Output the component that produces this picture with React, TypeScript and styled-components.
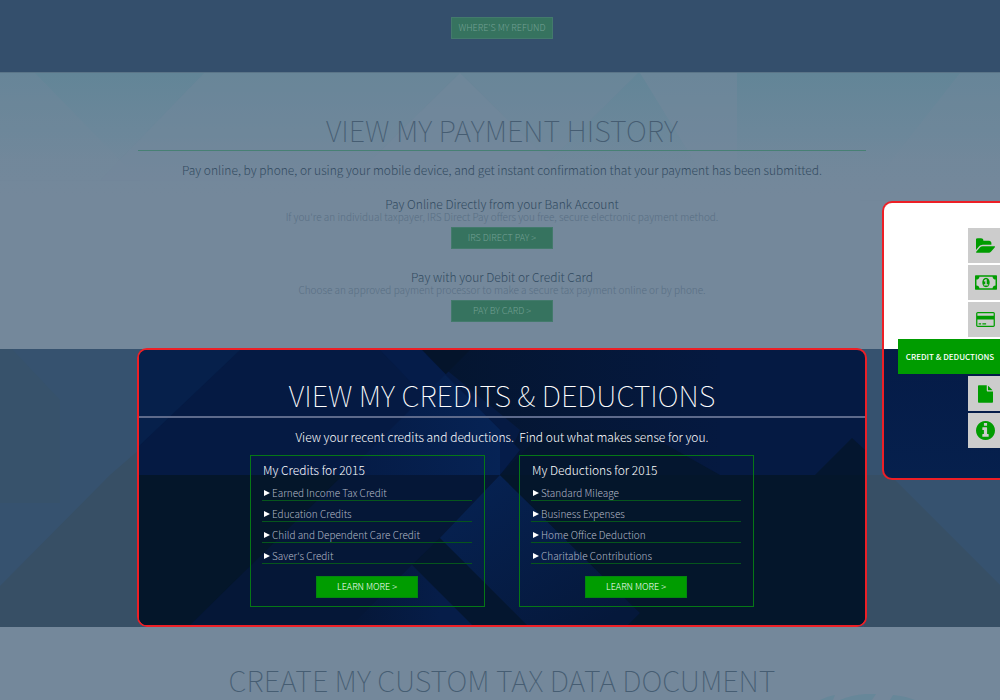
import React from "react";
import styled, { createGlobalStyle } from "styled-components";

const Global = createGlobalStyle`
  *, *::before, *::after { box-sizing: border-box; }
  body {
    margin: 0;
    background: #74889b;
    font-family: "Noto Sans CJK SC", "Noto Sans", sans-serif;
  }
  h1, h2, h3, p, ul { margin: 0; padding: 0; font-weight: 400; }
  ul { list-style: none; }
`;

const Page = styled.main`
  position: relative;
  min-height: 100vh;
  overflow: hidden;
`;

const Section = styled.section<{ $tone: "dark" | "light" }>`
  position: relative;
  display: flex;
  flex-direction: column;
  align-items: center;
  padding-left: 4px;
  background: ${(p) => (p.$tone === "dark" ? "#344f6c" : "#74889b")};
`;

const RefundSection = styled(Section)`
  padding-top: 17px;
  padding-bottom: 33px;
`;

const PaymentSection = styled(Section)`
  padding-bottom: 27px;
  border-top: 1px solid #5b7588;
`;

const DocumentSection = styled(Section)`
  min-height: 73px;
  padding-top: 33px;
`;

const Backdrop = styled.svg`
  position: absolute;
  inset: 0;
  width: 100%;
  height: 100%;
`;

const Column = styled.div`
  position: relative;
  display: flex;
  flex-direction: column;
  align-items: center;
  width: 100%;
  max-width: 728px;
  text-align: center;
`;

const Title = styled.h2<{ $color: string }>`
  width: 100%;
  font-size: 29px;
  font-weight: 100;
  line-height: 38px;
  white-space: nowrap;
  text-align: center;
  color: ${(p) => p.$color};
`;

const PaymentTitle = styled(Title)`
  padding: 37px 0 2px;
  border-bottom: 1px solid #478074;
`;

const CreditTitle = styled(Title)`
  padding: 25px 0 3px;
  border-bottom: 2px solid #5d6a8b;
`;

const Lead = styled.p<{ $color: string }>`
  margin-top: 9px;
  font-size: 12px;
  font-weight: 300;
  line-height: 20px;
  white-space: pre;
  color: ${(p) => p.$color};
`;

const Option = styled.div`
  display: flex;
  flex-direction: column;
  align-items: center;
  margin-top: 17px;

  & + & {
    margin-top: 21px;
  }
`;

const OptionTitle = styled.h3`
  font-size: 12px;
  font-weight: 300;
  line-height: 13px;
  color: #324b61;
`;

const OptionText = styled.p`
  font-size: 10px;
  font-weight: 300;
  line-height: 13px;
  color: #596f84;
`;

const Button = styled.button<{ $muted?: boolean }>`
  width: 102px;
  height: 22px;
  padding: 0;
  border: 1px solid ${(p) => (p.$muted ? "#437a6c" : "#04860f")};
  background: ${(p) => (p.$muted ? "#36735f" : "#009c00")};
  color: ${(p) => (p.$muted ? "#74a094" : "#fff")};
  font-family: inherit;
  font-size: 9px;
  font-weight: 300;
  line-height: 20px;
  cursor: pointer;
`;

const OptionButton = styled(Button)`
  margin-top: 4px;
`;

const Spotlight = styled(Column)`
  max-width: 730px;
  margin-top: -1px;
  padding-bottom: 18px;
  overflow: hidden;
  border: 2px solid #ed1f26;
  border-radius: 10px;
  background: #051a43;
`;

const SpotlightBody = styled.div`
  position: relative;
  display: flex;
  flex-direction: column;
  align-items: center;
  width: 100%;
`;

const Cards = styled.div`
  display: flex;
  gap: 34px;
  margin-top: 8px;
`;

const Card = styled.article`
  display: flex;
  flex-direction: column;
  width: 235px;
  padding: 4px 12px 8px 11px;
  border: 1px solid #067716;
  text-align: left;
`;

const CardTitle = styled.h3`
  padding-left: 1px;
  font-size: 12px;
  font-weight: 300;
  line-height: 20px;
  color: #fff;
`;

const Item = styled.li`
  display: flex;
  align-items: center;
  gap: 2px;
  height: 21px;
  padding: 6px 0 0 2px;
  border-bottom: 1px solid #06561c;
  color: #b2b8c6;
  font-size: 10px;
  font-weight: 300;
  line-height: 14px;

  &::before {
    content: "";
    border-left: 6px solid #fff;
    border-top: 3px solid transparent;
    border-bottom: 3px solid transparent;
  }
`;

const CardButton = styled(Button)`
  align-self: center;
  margin-top: 12px;
`;

const SideNav = styled.nav`
  position: absolute;
  top: 201px;
  right: 0;
  display: flex;
  flex-direction: column;
  align-items: flex-end;
  gap: 2px;
  width: 118px;
  padding: 25px 0 30px;
  border: 2px solid #ed1f26;
  border-right: 0;
  border-radius: 10px 0 0 10px;
  background: linear-gradient(#fff 146px, #051b47 146px, #06204d);
`;

const NavTile = styled.button`
  display: flex;
  align-items: center;
  justify-content: center;
  width: 32px;
  height: 35px;
  padding: 0 0 0 3px;
  border: 0;
  background: #ccc;
  color: #009c00;
  cursor: pointer;
`;

const NavCurrent = styled(NavTile)`
  width: 102px;
  padding: 0 0 0 2px;
  background: #009c00;
  color: #fff;
  font-family: inherit;
  font-size: 8px;
  font-weight: 500;
`;

const Glyph = styled.svg`
  flex: none;
  fill: currentColor;
`;

const Ring = styled.svg`
  position: absolute;
  right: 80px;
  bottom: 0;
`;

type Icon = { label: string; box: string; w: number; h: number; d: string };

const iconsAbove: Icon[] = [
  {
    label: "My tax records",
    box: "0 128 1815 1408",
    w: 19,
    h: 15,
    d: "M1815 952q0 31-31 66l-336 396q-43 51-120.5 86.5t-143.5 35.5h-1088q-34 0-60.5-13t-26.5-43q0-31 31-66l336-396q43-51 120.5-86.5t143.5-35.5h1088q34 0 60.5 13t26.5 43zm-343-344v160h-832q-94 0-197 47.5t-164 119.5l-337 396-5 6q0-4-.5-12.5t-.5-12.5v-960q0-92 66-158t158-66h320q92 0 158 66t66 158v32h544q92 0 158 66t66 158z",
  },
  {
    label: "My refund",
    box: "0 256 1920 1280",
    w: 22,
    h: 15,
    d: "M768 1152h384v-96h-128v-448h-114l-148 137 77 80q42-37 55-57h2v288h-128v96zm512-256q0 70-21 142t-59.5 134-101.5 101-138 39-138-39-101.5-101-59.5-134-21-142 21-142 59.5-134 101.5-101 138-39 138 39 101.5 101 59.5 134 21 142zm512 256v-512q-106 0-181-75t-75-181h-1152q0 106-75 181t-181 75v512q106 0 181 75t75 181h1152q0-106 75-181t181-75zm128-832v1152q0 26-19 45t-45 19h-1792q-26 0-45-19t-19-45v-1152q0-26 19-45t45-19h1792q26 0 45 19t19 45z",
  },
  {
    label: "Payment history",
    box: "0 128 1920 1536",
    w: 19,
    h: 15,
    d: "M1760 128q66 0 113 47t47 113v1216q0 66-47 113t-113 47h-1600q-66 0-113-47t-47-113v-1216q0-66 47-113t113-47h1600zm-1600 128q-13 0-22.5 9.5t-9.5 22.5v224h1664v-224q0-13-9.5-22.5t-22.5-9.5h-1600zm1600 1280q13 0 22.5-9.5t9.5-22.5v-608h-1664v608q0 13 9.5 22.5t22.5 9.5h1600zm-1504-128v-128h256v128h-256zm384 0v-128h384v128h-384z",
  },
];

const iconsBelow: Icon[] = [
  {
    label: "Custom tax data document",
    box: "128 0 1536 1792",
    w: 15,
    h: 18,
    d: "M1152 512v-472q22 14 36 28l408 408q14 14 28 36h-472zm-128 32q0 40 28 68t68 28h544v1056q0 40-28 68t-68 28h-1344q-40 0-68-28t-28-68v-1600q0-40 28-68t68-28h800v544z",
  },
  {
    label: "Information",
    box: "128 128 1536 1536",
    w: 19,
    h: 19,
    d: "M1152 1376v-160q0-14-9-23t-23-9h-96v-512q0-14-9-23t-23-9h-320q-14 0-23 9t-9 23v160q0 14 9 23t23 9h96v320h-96q-14 0-23 9t-9 23v160q0 14 9 23t23 9h448q14 0 23-9t9-23zm-128-896v-160q0-14-9-23t-23-9h-192q-14 0-23 9t-9 23v160q0 14 9 23t23 9h192q14 0 23-9t9-23zm640 416q0 209-103 385.5t-279.5 279.5-385.5 103-385.5-103-279.5-279.5-103-385.5 103-385.5 279.5-279.5 385.5-103 385.5 103 279.5 279.5 103 385.5z",
  },
];

const cards = [
  {
    title: "My Credits for 2015",
    items: ["Earned Income Tax Credit", "Education Credits", "Child and Dependent Care Credit", "Saver's Credit"],
  },
  {
    title: "My Deductions for 2015",
    items: ["Standard Mileage", "Business Expenses", "Home Office Deduction", "Charitable Contributions"],
  },
];

const payOptions = [
  {
    title: "Pay Online Directly from your Bank Account",
    text: "If you're an individual taxpayer, IRS Direct Pay offers you free, secure electronic payment method.",
    action: "IRS DIRECT PAY >",
  },
  {
    title: "Pay with your Debit or Credit Card",
    text: "Choose an approved payment processor to make a secure tax payment online or by phone.",
    action: "PAY BY CARD >",
  },
];

const Tile = ({ icon }: { icon: Icon }) => (
  <NavTile aria-label={icon.label}>
    <Glyph width={icon.w} height={icon.h} viewBox={icon.box} aria-hidden="true">
      <path d={icon.d} />
    </Glyph>
  </NavTile>
);

const PaymentBackdrop = () => (
  <Backdrop viewBox="0 72 1000 277" preserveAspectRatio="none" aria-hidden="true">
    <defs>
      <linearGradient id="teal" x1="0" y1="72" x2="0" y2="200" gradientUnits="userSpaceOnUse">
        <stop offset="0" stopColor="#628597" />
        <stop offset="0.5" stopColor="#6a879a" stopOpacity="0.8" />
        <stop offset="1" stopColor="#74889b" stopOpacity="0" />
      </linearGradient>
    </defs>
    <rect y="72" width="1000" height="130" fill="url(#teal)" />
    <path d="M204 72H500V180H100z" fill="#74889b" opacity="0.4" />
    <path d="M460 72L350 180H570z" fill="#74889b" opacity="0.5" />
    <path d="M0 72H35L140 180H0z" fill="#74889b" opacity="0.3" />
    <path d="M500 72H638L540 170H500z" fill="#74889b" opacity="0.4" />
    <path d="M640 72H737V170H700L640 72z" fill="#74889b" opacity="0.5" />
    <path d="M960 72H1000V200H860z" fill="#74889b" opacity="0.3" />
  </Backdrop>
);

const DarkBackdrop = () => (
  <Backdrop viewBox="0 349 1000 278" preserveAspectRatio="none" aria-hidden="true">
    <path d="M0 349H1000V627H0z" fill="#36526f" />
    <path d="M0 349H12L60 400V503H0z" fill="#37526b" />
    <path d="M140 449V627H0V586L110 475z" fill="#374f65" />
    <path d="M864 475H890L1000 585V627H864z" fill="#374f65" />
  </Backdrop>
);

const SpotlightBackdrop = () => (
  <Backdrop viewBox="139 350 726 275" preserveAspectRatio="none" aria-hidden="true">
    <defs>
      <linearGradient id="shade" x1="0" y1="0" x2="1" y2="0">
        <stop offset="0" stopColor="#04152f" />
        <stop offset="1" stopColor="#051940" />
      </linearGradient>
      <linearGradient id="peak" x1="0" y1="0" x2="1" y2="0">
        <stop offset="0" stopColor="#051b45" />
        <stop offset="1" stopColor="#062355" />
      </linearGradient>
      <linearGradient id="streak" x1="500" y1="475" x2="600" y2="625" gradientUnits="userSpaceOnUse">
        <stop offset="0" stopColor="#062150" />
        <stop offset="1" stopColor="#05183b" />
      </linearGradient>
      <linearGradient id="wedge" x1="350" y1="0" x2="440" y2="0" gradientUnits="userSpaceOnUse">
        <stop offset="0" stopColor="#051737" />
        <stop offset="1" stopColor="#061d49" />
      </linearGradient>
    </defs>
    <path d="M139 350H240L139 446z" fill="#06204b" />
    <path d="M422 350H720V475H500L520 430z" fill="url(#shade)" />
    <path d="M422 350H470L445 375z" fill="#04142b" />
    <path d="M380 350H422L520 450L500 475z" fill="#051c49" />
    <path d="M445 375L500 430V475H345z" fill="url(#peak)" />
    <path d="M139 475H865V625H139z" fill="#051737" />
    <path d="M139 475H343L190 625H139z" fill="#04162a" />
    <path d="M440 538L412 565L472 625H530z" fill="#04162f" />
    <path d="M412 565L472 625H352z" fill="url(#wedge)" />
    <path d="M500 475L640 613L628 625H527L440 538z" fill="url(#streak)" />
    <path d="M500 475H865V625H628L640 613z" fill="#04162b" />
    <path d="M500 475L545 430H640L720 475z" fill="#04162f" />
    <path d="M852 438L865 450V475H815z" fill="#04162f" />
  </Backdrop>
);

export default function App() {
  return (
    <Page>
      <Global />
      <RefundSection $tone="dark">
        <Button $muted>WHERE'S MY REFUND</Button>
      </RefundSection>

      <PaymentSection $tone="light">
        <PaymentBackdrop />
        <Column>
          <PaymentTitle $color="#465d72">VIEW MY PAYMENT HISTORY</PaymentTitle>
          <Lead $color="#324b61">
            Pay online, by phone, or using your mobile device, and get instant confirmation that your payment has been submitted.
          </Lead>
          {payOptions.map((o) => (
            <Option key={o.title}>
              <OptionTitle>{o.title}</OptionTitle>
              <OptionText>{o.text}</OptionText>
              <OptionButton $muted>{o.action}</OptionButton>
            </Option>
          ))}
        </Column>
      </PaymentSection>

      <Section $tone="dark">
        <DarkBackdrop />
        <Spotlight>
          <SpotlightBackdrop />
          <SpotlightBody>
            <CreditTitle $color="#fff">VIEW MY CREDITS &amp; DEDUCTIONS</CreditTitle>
            <Lead $color="#fff">{"View your recent credits and deductions.  Find out what makes sense for you."}</Lead>
            <Cards>
              {cards.map((c) => (
                <Card key={c.title}>
                  <CardTitle>{c.title}</CardTitle>
                  <ul>
                    {c.items.map((i) => (
                      <Item key={i}>{i}</Item>
                    ))}
                  </ul>
                  <CardButton>LEARN MORE &gt;</CardButton>
                </Card>
              ))}
            </Cards>
          </SpotlightBody>
        </Spotlight>
      </Section>

      <DocumentSection $tone="light">
        <Ring width="100" height="6" viewBox="0 0 100 6" aria-hidden="true">
          <path d="M0 6Q8 2 15 1L13 6zM20 6Q35 -1 56 0L52 6zM70 6L73 1Q85 2 95 6z" fill="#678799" />
        </Ring>
        <Title $color="#465d72">CREATE MY CUSTOM TAX DATA DOCUMENT</Title>
      </DocumentSection>

      <SideNav aria-label="Page sections">
        {iconsAbove.map((i) => (
          <Tile key={i.label} icon={i} />
        ))}
        <NavCurrent>CREDIT &amp; DEDUCTIONS</NavCurrent>
        {iconsBelow.map((i) => (
          <Tile key={i.label} icon={i} />
        ))}
      </SideNav>
    </Page>
  );
}
